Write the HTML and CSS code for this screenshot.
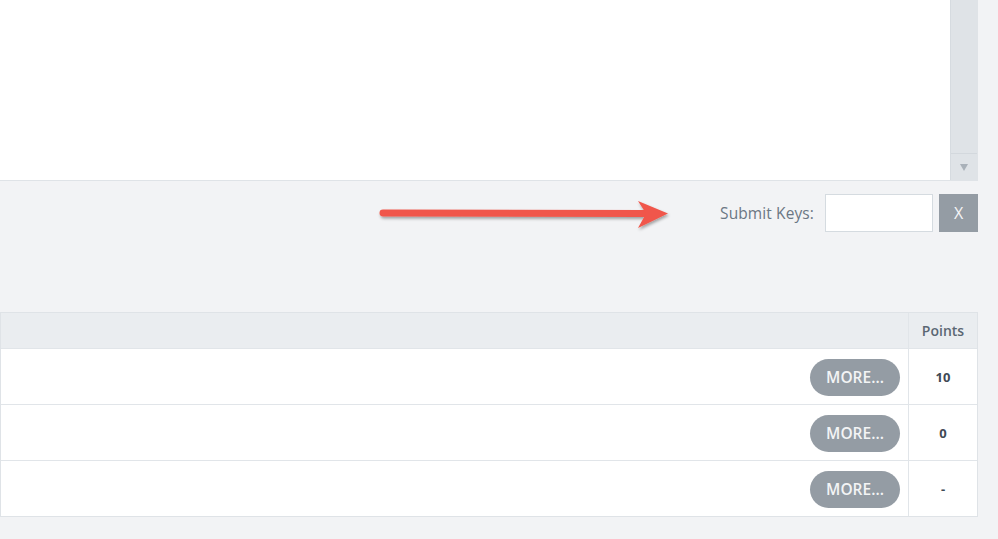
FILE: index.html
```html
<!DOCTYPE html>
<html>
<head>
<meta charset="utf-8">
<link rel="stylesheet" href="styles.css">
</head>
<body>
<div class="page">
  <div class="console">
    <div class="console-body"></div>
    <div class="scrollbar">
      <div class="track"></div>
      <div class="scroll-btn"><span class="tri"></span></div>
    </div>
  </div>
  <div class="submit-row">
    <label class="submit-label" for="keys">Submit Keys:</label>
    <input id="keys" class="keys-input" type="text">
    <button class="x-btn">X</button>
    <svg class="arrow" width="310" height="40" viewBox="0 0 310 40">
      <defs>
        <filter id="sh" x="-10%" y="-50%" width="120%" height="200%">
          <feDropShadow dx="1" dy="2" stdDeviation="1.5" flood-color="#000" flood-opacity="0.35"/>
        </filter>
      </defs>
      <g filter="url(#sh)">
        <line x1="11" y1="19" x2="274" y2="19.5" stroke="#f0574b" stroke-width="7" stroke-linecap="round"/>
        <polygon points="266,7 296,19.5 266,34 274,19.5" fill="#f0574b"/>
      </g>
    </svg>
  </div>
  <div class="table">
    <div class="row head">
      <div class="cell main"></div>
      <div class="cell pts">Points</div>
    </div>
    <div class="row">
      <div class="cell main"><button class="more">MORE...</button></div>
      <div class="cell pts val">10</div>
    </div>
    <div class="row">
      <div class="cell main"><button class="more">MORE...</button></div>
      <div class="cell pts val">0</div>
    </div>
    <div class="row">
      <div class="cell main"><button class="more">MORE...</button></div>
      <div class="cell pts val">-</div>
    </div>
  </div>
</div>
</body>
</html>
```
FILE: styles.css
```css
* { box-sizing: border-box; }
html, body { margin: 0; padding: 0; }
body {
  background: #f2f3f5;
  font-family: "Open Sans", "Noto Sans", sans-serif;
  width: 998px;
  height: 539px;
  overflow: hidden;
}
.page {
  width: 978px;
}
.console {
  height: 181px;
  display: flex;
  background: #ffffff;
  border-bottom: 1px solid #dfe3e7;
  border-right: 1px solid #dfe3e7;
}
.console-body { flex: 1; }
.scrollbar {
  width: 27px;
  display: flex;
  flex-direction: column;
  background: #dfe3e7;
  border-left: 1px solid #d6dbe0;
}
.track { flex: 1; }
.scroll-btn {
  height: 27px;
  border-top: 1px solid #d3d8dd;
  display: flex;
  align-items: center;
  justify-content: center;
}
.tri {
  width: 0;
  height: 0;
  border-left: 4px solid transparent;
  border-right: 4px solid transparent;
  border-top: 7px solid #a9b1b9;
}
.submit-row {
  position: relative;
  display: flex;
  justify-content: flex-end;
  align-items: center;
  margin-top: 13px;
  height: 38px;
}
.submit-label {
  font-size: 15.5px;
  color: #6b7784;
  margin-right: 11px;
  letter-spacing: 0.1px;
}
.keys-input {
  width: 108px;
  height: 38px;
  border: 1px solid #d5dbe0;
  background: #fff;
  margin: 0;
  padding: 0 6px;
  outline: none;
}
.x-btn {
  width: 39px;
  height: 38px;
  margin: 0 0 0 6px;
  border: none;
  background: #949ca4;
  color: #f4f5f6;
  font-family: "Open Sans", sans-serif;
  font-size: 16px;
  padding: 0;
}
.arrow {
  position: absolute;
  left: 372px;
  top: 0;
}
.table {
  margin-top: 80px;
  background: #fff;
  border: 1px solid #dfe3e7;
}
.row {
  display: flex;
  height: 56px;
  border-top: 1px solid #e1e5e9;
}
.row:first-child { border-top: none; }
.row.head {
  height: 35px;
  background: #eaedf0;
}
.cell.main {
  flex: 1;
  display: flex;
  justify-content: flex-end;
  align-items: center;
  padding-right: 8px;
}
.cell.pts {
  width: 69px;
  border-left: 1px solid #e1e5e9;
  display: flex;
  align-items: center;
  justify-content: center;
  font-size: 14px;
  font-weight: 600;
  color: #5b6773;
}
.cell.val {
  font-size: 13px;
  font-weight: 700;
  color: #3f4a55;
}
.more {
  width: 90px;
  height: 37px;
  border: none;
  border-radius: 19px;
  background: #949ca4;
  color: #f3f4f5;
  font-family: "Open Sans", sans-serif;
  font-size: 15.5px;
  font-weight: 600;
  padding: 0;
  margin-top: 1px;
}
```
